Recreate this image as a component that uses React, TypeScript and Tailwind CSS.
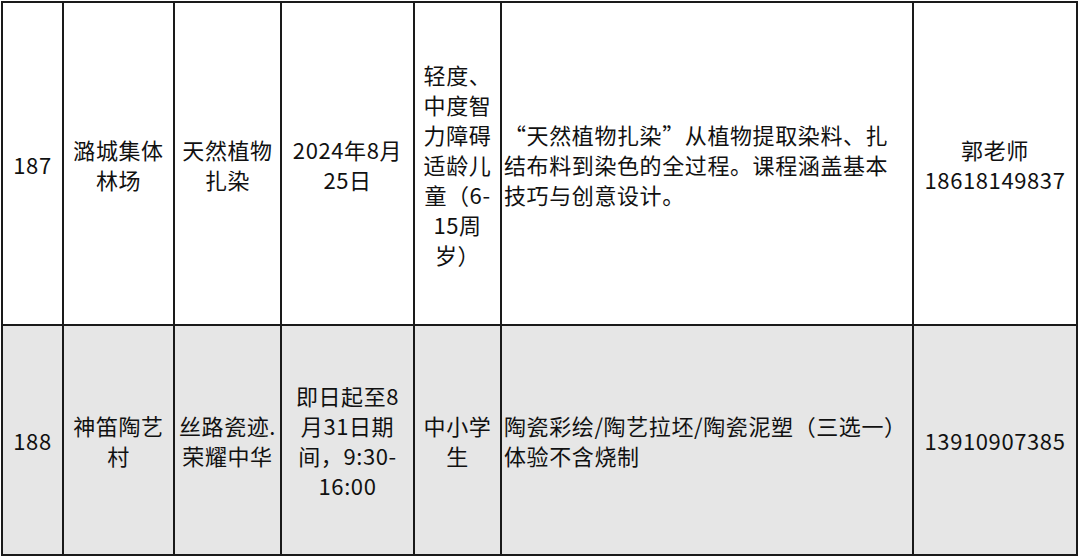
import React from 'react';

interface Row {
  cells: string[][];
  shaded?: boolean;
}

const rows: Row[] = [
  {
    cells: [
      ['187'],
      ['潞城集体', '林场'],
      ['天然植物', '扎染'],
      ['2024年8月', '25日'],
      ['轻度、', '中度智', '力障碍', '适龄儿', '童（6-', '15周', '岁）'],
      ['“天然植物扎染”从植物提取染料、扎', '结布料到染色的全过程。课程涵盖基本', '技巧与创意设计。'],
      ['郭老师', '18618149837'],
    ],
  },
  {
    shaded: true,
    cells: [
      ['188'],
      ['神笛陶艺', '村'],
      ['丝路瓷迹.', '荣耀中华'],
      ['即日起至8', '月31日期', '间，9:30-', '16:00'],
      ['中小学', '生'],
      ['陶瓷彩绘/陶艺拉坯/陶瓷泥塑（三选一）', '体验不含烧制'],
      ['13910907385'],
    ],
  },
];

// column widths measured between grid lines
const colWidths = ['w-[61px]', 'w-[111px]', 'w-[107px]', 'w-[133px]', 'w-[87px]', 'w-[412px]', 'w-[164px]'];
const rowHeights = ['h-[323px]', 'h-[230px]'];

export default function App() {
  return (
    <div
      className="w-[1080px] h-[559px] bg-white pt-px pl-px text-[#111] overflow-hidden"
      style={{ fontFamily: '"Noto Sans CJK SC", "Noto Sans", sans-serif' }}
      lang="zh-CN"
    >
      <table className="table-fixed border-collapse border-2 border-[#1a1a1a] w-[1077px]">
        <colgroup>
          {colWidths.map((w, i) => (
            <col key={i} className={w} />
          ))}
        </colgroup>
        <tbody>
          {rows.map((row, r) => (
            <tr key={r} className={row.shaded ? 'bg-[#e6e6e6]' : 'bg-white'}>
              {row.cells.map((lines, c) => (
                <td
                  key={c}
                  className={`${rowHeights[r]} border-2 border-[#1a1a1a] align-middle p-0 text-[22px] leading-[30px] tracking-[0.6px] whitespace-nowrap ${
                    c === 5 ? 'text-left pl-[2px]' : 'text-center'
                  }`}
                >
                  {lines.map((l, i) => (
                    <div key={i}>{l}</div>
                  ))}
                </td>
              ))}
            </tr>
          ))}
        </tbody>
      </table>
    </div>
  );
}
